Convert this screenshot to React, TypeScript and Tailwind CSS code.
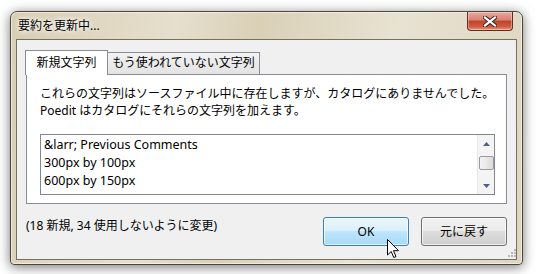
import React from 'react';

const font = "font-['Noto_Sans','Noto_Sans_CJK_JP',sans-serif]";

function CloseButton() {
  return (
    <div className="absolute right-[4px] top-0 flex h-[19px] w-[46px] items-center justify-center rounded-b-[4px] border border-t-0 border-[#6b2a20] bg-[linear-gradient(to_bottom,#e9a99c_0%,#d88170_45%,#c2432b_50%,#cd5a3f_80%,#e39a7c_100%)] shadow-[inset_0_0_0_1px_rgba(255,255,255,0.35)]">
      <svg width="14" height="11" viewBox="0 0 14 11">
        <path d="M2 1.5 L12 9.5 M12 1.5 L2 9.5" stroke="#3b2a24" strokeWidth="4.2" strokeLinecap="square" />
        <path d="M2 1.5 L12 9.5 M12 1.5 L2 9.5" stroke="#ffffff" strokeWidth="2.2" strokeLinecap="square" />
      </svg>
    </div>
  );
}

function Scrollbar() {
  return (
    <div className="flex w-[17px] flex-col items-center border-l border-[#e8e8e8] bg-[#f4f4f4]">
      <div className="flex h-[17px] w-full items-center justify-center">
        <svg width="7" height="4" viewBox="0 0 7 4"><path d="M0 4 L3.5 0 L7 4 Z" fill="#4d6185" /></svg>
      </div>
      <div className="mt-[4px] h-[14px] w-[15px] rounded-[2px] border border-[#9a9a9a] bg-[linear-gradient(to_right,#f3f3f3,#dcdcdc)]" />
      <div className="flex-1" />
      <div className="flex h-[17px] w-full items-center justify-center">
        <svg width="7" height="4" viewBox="0 0 7 4"><path d="M0 0 L7 0 L3.5 4 Z" fill="#4d6185" /></svg>
      </div>
    </div>
  );
}

function Cursor() {
  return (
    <svg className="absolute left-[387px] top-[239px]" width="13" height="20" viewBox="0 0 13 20">
      <path d="M0.5 0.5 L0.5 16 L4.2 12.5 L6.8 18.5 L9 17.6 L6.5 11.7 L11.5 11.7 Z" fill="#ffffff" stroke="#000000" strokeWidth="1" strokeLinejoin="round" />
    </svg>
  );
}

export default function App() {
  const items = ['&larr; Previous Comments', '300px by 100px', '600px by 150px'];
  return (
    <div className={`relative h-[274px] w-[542px] overflow-hidden bg-white text-[12px] text-black ${font}`}>
      <div className="ml-[10px] mt-[11px] flex h-[254px] w-[513px] flex-col rounded-t-[7px] rounded-b-[4px] border border-[#4a4739] bg-[linear-gradient(100deg,#d8ceb4_0%,#e6dfcd_30%,#d9d0b6_45%,#e8e2d2_70%,#ddd5bf_100%)] px-[5px] pb-[4px] shadow-[0_2px_12px_rgba(0,0,0,0.55),inset_0_0_0_1px_rgba(255,255,255,0.55)]">
        <div className="relative flex h-[27px] items-center pl-[2px] pt-[1px]">
          <span className="[text-shadow:0_0_6px_#fff,0_0_4px_#fff]">要約を更新中...</span>
          <CloseButton />
        </div>
        <div className="flex flex-1 flex-col border border-[#77705d] bg-[#f0f0f0] px-[9px] pt-[10px]">
          <div className="flex h-[24px] items-end">
            <div className="relative z-10 -ml-[1px] -mb-px flex h-[25px] w-[83px] items-start justify-center border border-b-0 border-[#898c95] bg-white pt-[3px]">
              新規文字列
            </div>
            <div className="flex h-[22px] w-[152px] items-start justify-center border border-l-0 border-b-0 border-[#898c95] bg-[linear-gradient(to_bottom,#f2f2f2,#e3e3e3)] pt-[1px]">
              もう使われていない文字列
            </div>
          </div>
          <div className="flex h-[130px] w-[481px] flex-col border border-[#898c95] bg-white pl-[13px] pr-[11px] pt-[10px]">
            <p className="leading-[17px]">これらの文字列はソースファイル中に存在しますが、カタログにありませんでした。</p>
            <p className="leading-[17px]">Poedit はカタログにそれらの文字列を加えます。</p>
            <div className="mt-[15px] flex h-[61px] border border-[#828790] bg-white">
              <div className="flex-1 pl-[3px] pt-[1px] text-[12.5px]">
                {items.map((t) => (
                  <div key={t} className="h-[18px] leading-[18px]">{t}</div>
                ))}
              </div>
              <Scrollbar />
            </div>
          </div>
          <div className="flex flex-1 items-start">
            <div className="pt-[13px]">(18 新規, 34 使用しないように変更)</div>
            <div className="ml-auto mt-[13px] flex gap-[12px]">
              <button className="h-[29px] w-[86px] rounded-[3px] border border-[#3c7fb1] bg-[linear-gradient(to_bottom,#eaf6fd_0%,#d9f0fc_50%,#bee6fd_50%,#a7d9f5_100%)] shadow-[inset_0_0_0_1px_rgba(255,255,255,0.7)]">OK</button>
              <button className="h-[29px] w-[86px] rounded-[3px] border border-[#707070] bg-[linear-gradient(to_bottom,#f2f2f2_0%,#ebebeb_50%,#dddddd_50%,#cfcfcf_100%)] shadow-[inset_0_0_0_1px_rgba(255,255,255,0.7)]">元に戻す</button>
            </div>
          </div>
        </div>
      </div>
      <svg className="absolute left-[508px] top-[249px]" width="8" height="8" viewBox="0 0 8 8">
        {[[6, 0], [6, 3], [3, 3], [6, 6], [3, 6], [0, 6]].map(([x, y]) => (
          <rect key={`${x}-${y}`} x={x} y={y} width="2" height="2" fill="#b8b8b8" />
        ))}
      </svg>
      <Cursor />
    </div>
  );
}
